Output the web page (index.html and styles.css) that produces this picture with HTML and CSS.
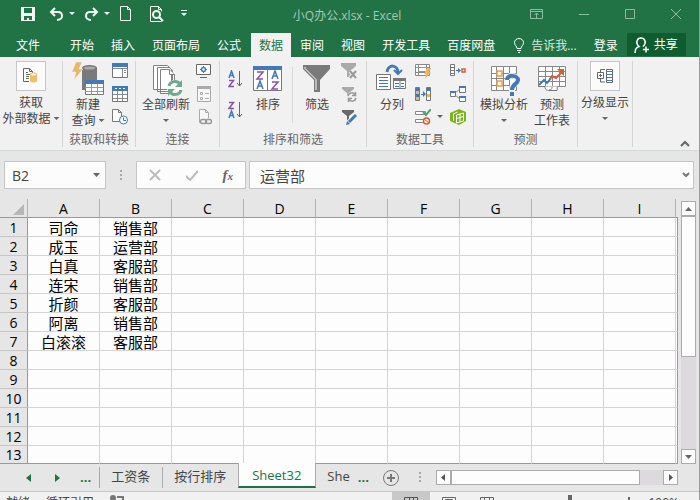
FILE: index.html
```html
<!DOCTYPE html>
<html lang="zh-CN">
<head>
<meta charset="utf-8">
<title>小Q办公.xlsx - Excel</title>
<link rel="stylesheet" href="styles.css">
</head>
<body>
<div class="window">
<header class="titlebar">
	<div class="quick">
		<button aria-label="保存"><svg width="14" height="14" viewBox="0 0 14 14"><path fill="#f4f8f5" fill-rule="evenodd" d="M0 0h14v14H0zM3 1v5h8V1zM3 9v4h3v-2h2v2h3V9z"/></svg></button>
		<button class="wide" aria-label="撤消"><svg width="26" height="14" viewBox="0 0 26 14"><path fill="none" stroke="#f4f8f5" stroke-width="2" d="M6 1L2 5l4 4M2 5h7c3 0 4 2 4 4s-2 4-5 4"/><path fill="#f4f8f5" d="M20 5h6l-3 3z"/></svg></button>
		<button class="wide" aria-label="恢复"><svg width="26" height="14" viewBox="0 0 26 14"><path fill="none" stroke="#f4f8f5" stroke-width="2" d="M9 1l4 4-4 4M13 5H6C3 5 2 7 2 9s2 4 5 4"/><path fill="#f4f8f5" d="M20 5h6l-3 3z"/></svg></button>
		<button aria-label="新建"><svg width="14" height="15" viewBox="0 0 14 15"><path fill="none" stroke="#f4f8f5" d="M1.500.500h7l3 3v11h-10zM8.500.5v3h3"/></svg></button>
		<button class="preview" aria-label="打印预览"><svg width="14" height="16" viewBox="0 0 14 16"><path fill="none" stroke="#f4f8f5" d="M.5.500h8l3 3v2M.5.5v15h11v-2M8.500.5v3h3"/><circle cx="6.500" cy="8.500" r="3.500" fill="none" stroke="#f4f8f5" stroke-width="2"/><path stroke="#f4f8f5" stroke-width="2" d="M9 11l4 4"/></svg></button>
		<button class="custom" aria-label="自定义"><svg width="6" height="7" viewBox="0 0 6 7"><path fill="#f4f8f5" d="M0 0h6v1H0zM0 3h6L3 6z"/></svg></button>
	</div>
	<div class="doc-name">小Q办公.xlsx - Excel</div>
	<div class="sys">
		<button aria-label="功能区显示选项"><svg width="13" height="10" viewBox="0 0 13 10"><path fill="none" stroke="#8fb9a0" d="M.5.5h12v9H.5zM1 2.500h11M6.500 9V4M4.500 6l2-2 2 2"/></svg></button>
		<button aria-label="最小化"><svg width="10" height="10" viewBox="0 0 10 10"><path stroke="#8fb9a0" d="M0 5.500h10"/></svg></button>
		<button aria-label="最大化"><svg width="10" height="10" viewBox="0 0 10 10"><path fill="none" stroke="#8fb9a0" d="M.5.5h9v9h-9z"/></svg></button>
		<button aria-label="关闭"><svg width="10" height="10" viewBox="0 0 10 10"><path stroke="#8fb9a0" d="M0 0l10 10M10 0L0 10"/></svg></button>
	</div>
</header>

<nav class="tabs">
	<button class="file">文件</button>
	<button>开始</button>
	<button>插入</button>
	<button>页面布局</button>
	<button>公式</button>
	<button class="on">数据</button>
	<button>审阅</button>
	<button>视图</button>
	<button>开发工具</button>
	<button>百度网盘</button>
	<button class="tell"><svg width="10" height="15" viewBox="0 0 10 15"><path fill="none" stroke="#fff" d="M3 10.500C3 8 .5 7.500.5 4.500a4.500 4 0 0 1 9 0C9.500 7.500 7 8 7 10.500zM3 12.500h4M4 14.500h2"/></svg>告诉我...</button>
	<button class="login">登录</button>
	<button class="share"><svg width="16" height="16" viewBox="0 0 16 16"><path fill="none" stroke="#fff" stroke-width="1.500" d="M1 16c0-4 2-6 4-6.500C1 6 3 1 7 1s6 5 2 8.500M9 12.500h6M12 9.500v6"/></svg>共享</button>
</nav>

<section class="ribbon">
	<div class="group g-ext">
		<div class="tools">
			<button class="big"><span class="frame"><svg width="16" height="16" viewBox="0 0 16 16"><path fill="#fff" stroke="#666" d="M.5 13.500V.5h6l3 3v3M6.500.5v3h3M.5 13.500H6M3 4.500h2M3 6.500h4M3 8.500h3M3 10.500h3"/><path fill="#ecc06b" d="M7 6c0-2 7-2 7 0v7c0 2-7 2-7 0z"/><ellipse cx="10.500" cy="6.500" rx="2.500" ry="1" fill="#fff"/></svg></span>获取<br>外部数据<i class="caret"></i></button>
		</div>
	</div>
	<div class="group g-query">
		<div class="tools">
			<button class="big"><svg class="pic" width="34" height="36" viewBox="0 0 34 36"><path fill="#7a7a7a" d="M11 7c0-4 15-4 15 0v22H11z"/><ellipse cx="18.500" cy="7" rx="5.500" ry="1.500" fill="#aaa"/><path fill="#e9b763" stroke="#f1f1f1" stroke-width=".5" d="M5 1h6L8 8h4L3 19l2-8H1z"/><path fill="#fff" stroke="#777" d="M14.500 19.500h18v14h-18z"/><path fill="#4379b5" d="M14 19h19v4H14z"/><path stroke="#999" fill="none" d="M14 26.500h18M14 30.500h18M20.500 23v11M26.500 23v11"/></svg>新建<br>查询<i class="caret"></i></button>
			<div class="smalls">
				<button aria-label="显示查询"><svg width="16" height="16" viewBox="0 0 16 16"><path fill="#fff" stroke="#777" d="M.5.5h15v14H.5z"/><path fill="#4379b5" d="M0 0h16v4H0z"/><path fill="none" stroke="#888" d="M1 5.500h14M10.500 6v8M12 7.500h2M12 9.500h2"/></svg></button>
				<button aria-label="从表格"><svg width="16" height="16" viewBox="0 0 16 16"><path fill="#fff" stroke="#777" d="M.5.5h15v15H.5z"/><path fill="#4379b5" d="M0 0h16v5H0z"/><path stroke="#fff" d="M3 2.500h2M7 2.500h2M11 2.500h2"/><path stroke="#888" d="M1 8.500h14M1 12.500h14M5.500 5v10M10.500 5v10"/></svg></button>
				<button aria-label="最近使用的源"><svg width="16" height="16" viewBox="0 0 16 16"><path fill="#fff" stroke="#777" d="M.5.5h6l3 3v9h-9zM6.500.5v3h3"/><circle cx="11.500" cy="11" r="4" fill="#fff" stroke="#4379b5"/><path fill="none" stroke="#4379b5" d="M11.500 8.500v3H14"/></svg></button>
			</div>
		</div>
		<div class="caption">获取和转换</div>
	</div>
	<div class="group g-conn">
		<div class="tools">
			<button class="big"><svg class="pic" width="34" height="36" viewBox="0 0 34 36"><g fill="#fff" stroke="#808080"><path d="M4.500 28.500v-24h14l4 4v20zM8.500 30.500v-24h12l3 3v21zM11.500 32.500v-24h9l5 5v19z"/><path d="M20.500 8.500v5h5"/></g><circle cx="26" cy="27" r="8" fill="#fff"/><g fill="none" stroke="#72a98d" stroke-width="3"><path d="M20 25c1-5 8-6 11-2M32 29c-1 5-8 6-11 2"/></g><path fill="#72a98d" d="M33 19v7h-7zM19 35v-7h7z"/></svg>全部刷新<br><i class="caret low"></i></button>
			<div class="smalls">
				<button aria-label="连接"><svg width="16" height="16" viewBox="0 0 16 16"><path fill="#fff" stroke="#666" d="M.5 1.500h14v10H.5zM4 14.500h7"/><circle cx="7.500" cy="6.500" r="2" fill="none" stroke="#4379b5" stroke-width="1.500"/><path stroke="#4379b5" d="M7.500 3v1M7.500 9v1M4 6.500h1M10 6.500h1"/></svg></button>
				<button aria-label="属性" disabled><svg width="16" height="16" viewBox="0 0 16 16"><path fill="#f7f7f7" stroke="#aaa" d="M1.500.500h13v15h-13z"/><path fill="#aaa" d="M1 0h14v3H1z"/><path fill="none" stroke="#aaa" d="M4.500 6.500h2v2h-2zM4.500 11.500h2v2h-2zM9 7.500h4M9 12.500h4"/></svg></button>
				<button aria-label="编辑链接" disabled><svg width="16" height="16" viewBox="0 0 16 16"><path fill="#f7f7f7" stroke="#aaa" d="M5 13.500H3.500V.500h6l3 3V9M9.500.500v3h3"/><rect x="4.500" y="10.500" width="6" height="4" rx="2" fill="none" stroke="#999" stroke-width="1.500"/><rect x="9.500" y="10.500" width="6" height="4" rx="2" fill="none" stroke="#999" stroke-width="1.500"/></svg></button>
			</div>
		</div>
		<div class="caption">连接</div>
	</div>
	<div class="group g-sort">
		<div class="tools">
			<div class="orders">
				<button aria-label="升序"><svg width="16" height="18" viewBox="0 0 16 18"><path fill="none" stroke="#4379b5" stroke-width="1.500" d="M1 8l2.500-7L6 8M2 5.500h3"/><path fill="none" stroke="#8e4fa8" stroke-width="1.500" d="M1 10.500h4.500L1 16.500h5"/><path fill="none" stroke="#666" d="M11.500 1v15M9 13l2.500 3 2.500-3"/></svg></button>
				<button aria-label="降序"><svg width="16" height="18" viewBox="0 0 16 18"><path fill="none" stroke="#8e4fa8" stroke-width="1.500" d="M1 1.500h4.500L1 7.500h5"/><path fill="none" stroke="#4379b5" stroke-width="1.500" d="M1 17l2.500-7L6 17M2 14.500h3"/><path fill="none" stroke="#666" d="M11.500 1v15M9 13l2.500 3 2.500-3"/></svg></button>
			</div>
			<button class="big"><svg class="pic" width="30" height="36" viewBox="0 0 30 36"><path fill="#fff" stroke="#777" d="M.500 5.500h28v24H.5zM14.500 8v21"/><path fill="#4379b5" d="M0 5h29v4H0z"/><g fill="none" stroke="#8e4fa8" stroke-width="1.500"><path d="M4 11h6l-6 7h6M19 21h6l-6 7h6"/></g><g fill="none" stroke="#4379b5" stroke-width="1.500"><path d="M4 28l3-8 3 8M5 25h4M19 18l3-8 3 8M20 15h4"/></g></svg>排序</button>
			<span class="rule"></span>
			<button class="big"><svg class="pic" width="30" height="36" viewBox="0 0 30 36"><path fill="#7a7a7a" d="M1 4h27v4L18 19v12h-6V19L1 8z"/><path fill="none" stroke="#fff" d="M3 6v1.500l11 11V29"/></svg>筛选</button>
			<div class="smalls">
				<button aria-label="清除" disabled><svg width="16" height="16" viewBox="0 0 16 16"><path fill="#aaa" d="M0 0h15v3L9 8v6H6V8L0 3z"/><path stroke="#f1f1f1" stroke-width="4" d="M9 8l7 7M16 8l-7 7"/><path stroke="#999" stroke-width="2" d="M9 8l6 7M15 8l-6 7"/></svg></button>
				<button aria-label="重新应用" disabled><svg width="16" height="16" viewBox="0 0 16 16"><path fill="#aaa" d="M1 1h12v2L8 7v5H6V7L1 3z"/><circle cx="11" cy="11" r="5" fill="#f1f1f1"/><path fill="none" stroke="#999" stroke-width="1.500" d="M7 10c1-4 6-4 7-1M15 12c-1 4-6 4-7 1M14.500 6v3.500H11M7.500 16v-3.500H11"/></svg></button>
				<button aria-label="高级"><svg width="16" height="16" viewBox="0 0 16 16"><path fill="#6a6a6a" d="M1 1h12v2L8 7v6H6V7L1 3z"/><path stroke="#f1f1f1" stroke-width="5" d="M7 14l8-8"/><path stroke="#4379b5" stroke-width="3" d="M8 13l7-7"/><path fill="#4379b5" d="M5 16l1-4 3 3z"/></svg></button>
			</div>
		</div>
		<div class="caption">排序和筛选</div>
	</div>
	<div class="group g-data">
		<div class="tools">
			<button class="big"><svg class="pic" width="32" height="36" viewBox="0 0 32 36"><path fill="#fff" stroke="#777" d="M.500 13.500h14v15H.5zM17.500 17.500h12v10h-12z"/><path stroke="#4379b5" d="M3 16.500h9M3 19.500h9M3 22.500h9M3 25.500h9"/><path fill="#777" d="M17 17h13v3H17z"/><path stroke="#4379b5" d="M19 22.500h4M25 22.500h3M19 25.500h4M25 25.500h3"/><path stroke="#777" d="M24 20v8"/><path fill="none" stroke="#4379b5" stroke-width="3" d="M11 11c1-8 11-8 11 1"/><path fill="none" stroke="#4379b5" stroke-width="2" d="M18 9l4 4 4-4"/></svg>分列</button>
			<div class="smalls">
				<button aria-label="快速填充"><svg width="16" height="16" viewBox="0 0 16 16"><path fill="#fff" stroke="#888" d="M.500 1.500h14v11H.5zM1 4.500h13M1 9.500h13M3.500 2v10M11.500 2v10"/><path fill="#fff" stroke="#72a98d" d="M3.500 4.500h8v4h-8z"/><path fill="#e9b763" d="M12 5h4l-2 4h2l-6 7 1-5H9z"/></svg></button>
				<button aria-label="删除重复项"><svg width="16" height="16" viewBox="0 0 16 16"><path fill="#fff" stroke="#777" d="M.500 1.500h4v13h-4zM11.500 1.500h4v13h-4z"/><path fill="#e9b763" d="M1 5h3v3H1zM1 11h3v3H1zM12 8h3v3h-3z"/><path fill="#4379b5" d="M1 2h3v3H1zM1 8h3v3H1zM12 2h3v3h-3zM8 5l3 3-3 3z"/><path stroke="#4379b5" d="M6 8.500h4"/></svg></button>
				<button aria-label="数据验证"><svg width="16" height="16" viewBox="0 0 16 16"><path fill="#fff" stroke="#888" d="M.500 2.500h10v3H.5zM.5 10.500h10v3H.5z"/><path fill="none" stroke="#4f9f78" stroke-width="2" d="M8 3l3 3 5-6"/><circle cx="11.500" cy="12" r="3" fill="#fff" stroke="#d95b3c" stroke-width="1.500"/><path stroke="#d95b3c" d="M9 10l5 4"/></svg></button>
			</div>
			<i class="caret alone"></i>
			<div class="smalls">
				<button aria-label="合并计算"><svg width="16" height="16" viewBox="0 0 16 16"><path fill="#fff" stroke="#777" d="M.500 1.500h4v11h-4zM1 4.500h4M1 7.500h4M1 10.500h4"/><path stroke="#4379b5" d="M6 7.500h4"/><path fill="#4379b5" d="M8 5l3 2.500L8 10z"/><path fill="#fff" stroke="#d95b3c" stroke-width="1.500" d="M12 6h3v3h-3z"/></svg></button>
				<button aria-label="关系"><svg width="16" height="16" viewBox="0 0 16 16"><path stroke="#888" d="M5 7l5-4M5 9l5 4"/><path fill="#fff" stroke="#777" d="M.500 5.500h5v5h-5zM9.500.500h6v6h-6zM9.500 10.500h6v5h-6z"/><path fill="#4379b5" d="M0 5h6v2H0zM9 0h7v2H9zM9 10h7v2H9z"/></svg></button>
				<button aria-label="管理数据模型"><svg width="16" height="16" viewBox="0 0 16 16"><path fill="#7ab51d" d="M0 4l9-4 7 3v9l-7 4-9-4z"/><path fill="none" stroke="#fff" d="M3.500 4.500v7M3.500 5l4-2M6.500 6v8l7-2V4zM6.500 9.500l7-2M10 5v8"/></svg></button>
			</div>
		</div>
		<div class="caption">数据工具</div>
	</div>
	<div class="group g-fore">
		<div class="tools">
			<button class="big"><svg class="pic" width="32" height="36" viewBox="0 0 32 36"><path fill="#fff" stroke="#888" d="M3.500 5.500h25v24h-25zM3 12.500h25M3 17.500h25M3 24.500h25M8.500 5v24M15.500 5v24M21.500 5v24"/><path fill="#fff" stroke="#e59a4f" stroke-width="1.500" d="M9 10h5v5H9zM9 20h5v5H9z"/><path fill="none" stroke="#f1f1f1" stroke-width="6" d="M20 19c0-6 9-5 9 0 0 4-5 4-5 9v3"/><path fill="none" stroke="#4379b5" stroke-width="4" d="M19 19c0-6 11-5 11 0 0 4-6 4-6 10"/><path fill="#4379b5" d="M22 31h4v4h-4z"/></svg>模拟分析<br><i class="caret low"></i></button>
			<button class="big"><svg class="pic" width="30" height="36" viewBox="0 0 30 36"><path fill="#fff" stroke="#888" d="M1.500 5.500h27v20h-27zM1 10.500h27M1 15.500h27M1 20.500h27M8.500 5v20M15.500 5v20M22.500 5v20"/><path fill="#fff" stroke="#777" d="M1 25.500h7c0 4 3 4 4 4h8c1-2-1-3 1-4M12 29c3 0 3-2 3-3"/><path fill="none" stroke="#4379b5" stroke-width="2" d="M2 24l5-5 3 3 4-5"/><path fill="none" stroke="#d95b3c" stroke-width="2" d="M13 18l2-3 4 2 7-7"/><path fill="#d95b3c" d="M20 8h7v7z"/></svg>预测<br>工作表</button>
		</div>
		<div class="caption">预测</div>
	</div>
	<div class="group g-level">
		<div class="tools">
			<button class="big"><span class="frame"><svg width="16" height="14" viewBox="0 0 16 14"><path fill="none" stroke="#666" d="M.500 3.500h6v6h-6zM2 6.500h3M3.500 5v3M3.500 3V.500H8M3.500 10v3H8"/><path fill="#fff" stroke="#666" d="M9.500.500h6v13h-6z"/><path stroke="#4379b5" d="M9 2.500h7M9 5.500h7M9 8.500h7M9 11.500h7"/></svg></span>分级显示<br><i class="caret"></i></button>
		</div>
	</div>
	<button class="fold" aria-label="折叠功能区"><svg width="10" height="7" viewBox="0 0 10 7"><path fill="none" stroke="#666" stroke-width="2" d="M1 6l4-4 4 4"/></svg></button>
</section>

<section class="formula">
	<div class="name-box"><input type="text" value="B2" aria-label="名称框"><i class="caret"></i></div>
	<span class="dots"></span>
	<div class="fx">
		<button aria-label="取消"><svg width="12" height="12" viewBox="0 0 12 12"><path stroke="#bbb" stroke-width="2" d="M1 1l10 10M11 1L1 11"/></svg></button>
		<button aria-label="输入"><svg width="12" height="12" viewBox="0 0 12 12"><path fill="none" stroke="#bbb" stroke-width="2" d="M0 7l4 4 8-9"/></svg></button>
		<button class="fn" aria-label="插入函数"><em>f</em><sub>x</sub></button>
	</div>
	<div class="entry"><input type="text" value="运营部" aria-label="编辑栏"><svg width="8" height="6" viewBox="0 0 8 6"><path fill="none" stroke="#777" stroke-width="2" d="M1 1l3 3 3-3"/></svg></div>
</section>

<main class="sheet">
	<table class="grid">
		<colgroup><col class="num"><col><col><col><col><col><col><col><col><col><col class="edge"></colgroup>
		<thead>
			<tr><th class="corner"><svg width="11" height="11" viewBox="0 0 11 11"><path fill="#b7b7b7" d="M11 0v11H0z"/></svg></th><th>A</th><th>B</th><th>C</th><th>D</th><th>E</th><th>F</th><th>G</th><th>H</th><th>I</th><th></th></tr>
		</thead>
		<tbody>
			<tr><th>1</th><td>司命</td><td>销售部</td><td></td><td></td><td></td><td></td><td></td><td></td><td></td><td></td></tr>
			<tr><th>2</th><td>成玉</td><td>运营部</td><td></td><td></td><td></td><td></td><td></td><td></td><td></td><td></td></tr>
			<tr><th>3</th><td>白真</td><td>客服部</td><td></td><td></td><td></td><td></td><td></td><td></td><td></td><td></td></tr>
			<tr><th>4</th><td>连宋</td><td>销售部</td><td></td><td></td><td></td><td></td><td></td><td></td><td></td><td></td></tr>
			<tr><th>5</th><td>折颜</td><td>客服部</td><td></td><td></td><td></td><td></td><td></td><td></td><td></td><td></td></tr>
			<tr><th>6</th><td>阿离</td><td>销售部</td><td></td><td></td><td></td><td></td><td></td><td></td><td></td><td></td></tr>
			<tr><th>7</th><td>白滚滚</td><td>客服部</td><td></td><td></td><td></td><td></td><td></td><td></td><td></td><td></td></tr>
			<tr><th>8</th><td></td><td></td><td></td><td></td><td></td><td></td><td></td><td></td><td></td><td></td></tr>
			<tr><th>9</th><td></td><td></td><td></td><td></td><td></td><td></td><td></td><td></td><td></td><td></td></tr>
			<tr><th>10</th><td></td><td></td><td></td><td></td><td></td><td></td><td></td><td></td><td></td><td></td></tr>
			<tr><th>11</th><td></td><td></td><td></td><td></td><td></td><td></td><td></td><td></td><td></td><td></td></tr>
			<tr><th>12</th><td></td><td></td><td></td><td></td><td></td><td></td><td></td><td></td><td></td><td></td></tr>
			<tr class="last"><th>13</th><td></td><td></td><td></td><td></td><td></td><td></td><td></td><td></td><td></td><td></td></tr>
		</tbody>
	</table>
	<div class="vscroll">
		<button class="arrow" aria-label="向上"><svg width="7" height="4" viewBox="0 0 7 4"><path fill="#666" d="M0 4h7L3.500 0z"/></svg></button>
		<div class="thumb"></div>
		<div class="track"></div>
		<button class="arrow" aria-label="向下"><svg width="7" height="4" viewBox="0 0 7 4"><path fill="#666" d="M0 0h7L3.500 4z"/></svg></button>
	</div>
</main>

<footer>
	<div class="sheets">
		<div class="steps">
			<button aria-label="上一张"><svg width="5" height="8" viewBox="0 0 5 8"><path fill="#1a7544" d="M5 0v8L0 4z"/></svg></button>
			<button aria-label="下一张"><svg width="5" height="8" viewBox="0 0 5 8"><path fill="#1a7544" d="M0 0v8l5-4z"/></svg></button>
			<button class="more">...</button>
		</div>
		<button class="tab">工资条</button>
		<button class="tab">按行排序</button>
		<button class="tab on">Sheet32</button>
		<button class="tab cut">She</button>
		<button class="more">...</button>
		<button class="add" aria-label="新工作表"><svg width="16" height="16" viewBox="0 0 16 16"><circle cx="8" cy="8" r="7.500" fill="none" stroke="#777"/><path stroke="#777" stroke-width="2" d="M4 8h8M8 4v8"/></svg></button>
		<span class="dots"></span>
		<div class="hscroll">
			<button class="arrow" aria-label="向左"><svg width="4" height="7" viewBox="0 0 4 7"><path fill="#555" d="M4 0v7L0 3.500z"/></svg></button>
			<div class="thumb"></div>
			<div class="track"></div>
			<button class="arrow" aria-label="向右"><svg width="4" height="7" viewBox="0 0 4 7"><path fill="#555" d="M0 0v7l4-3.500z"/></svg></button>
		</div>
	</div>
	<div class="status">
		<span>就绪</span>
		<span>循环引用</span>
		<svg width="14" height="12" viewBox="0 0 14 12"><circle cx="3" cy="3" r="3" fill="#777"/><path fill="none" stroke="#777" stroke-width="2" d="M7 2h6v8H2V7"/></svg>
		<div class="views">
			<button class="on" aria-label="普通"><svg width="14" height="12" viewBox="0 0 14 12"><path fill="none" stroke="#555" d="M.5.500h13v11H.5zM5.500 1v10M9.500 1v10M1 4.500h12M1 8.500h12"/></svg></button>
			<button aria-label="页面布局"><svg width="14" height="12" viewBox="0 0 14 12"><path fill="none" stroke="#666" d="M.5.500h13v11H.5zM3.500 2.500h7v9h-7zM5 5.500h4M5 8.500h4"/></svg></button>
			<button aria-label="分页预览"><svg width="14" height="12" viewBox="0 0 14 12"><path fill="none" stroke="#666" d="M.5.500h13v11H.5zM4.500 1v6h5V1"/></svg></button>
		</div>
		<div class="zoom"><svg width="70" height="12" viewBox="0 0 70 12"><path stroke="#999" d="M0 6.500h52"/><path fill="#666" d="M6 0h4v12H6z"/><path stroke="#666" stroke-width="2" d="M62 6h10M67 2v8"/></svg><span>100%</span></div>
	</div>
</footer>
</div>
</body>
</html>
```

FILE: styles.css
```css
*{box-sizing:border-box;}
body{margin:0;height:100vh;overflow:hidden;background:#e6e6e6;font:12px/15px "Open Sans","Noto Sans CJK SC",sans-serif;color:#444;}
button{margin:0;padding:0;border:0;background:none;font:inherit;color:inherit;}
input{border:0;padding:0;background:none;font:inherit;color:inherit;outline:0;min-width:0;}
svg{display:block;flex:none;}
.window{border-right:1px solid #999;}

/* title */
.titlebar{display:flex;align-items:center;height:33px;padding:0 18px 6px 21px;background:#217346;}
.quick{display:flex;align-items:center;flex:1;}
.quick button{margin-right:14px;}
.quick .wide{margin-right:9px;}
.quick .preview{margin:0 17px 0 3px;}
.doc-name{margin-right:8px;padding-top:4px;color:#a6c7b5;}
.sys{display:flex;justify-content:flex-end;align-items:center;flex:1;gap:36px;}

.tabs{display:flex;gap:1px;height:24px;padding-right:16px;background:#217346;color:#fff;}
.tabs button{padding:0 8px;white-space:nowrap;}
.tabs .file{padding:0 21px 0 16px;}
.tabs .on{margin-left:1px;background:#f1f1f1;color:#217346;}
.tabs .tell{display:flex;align-items:center;gap:7px;margin-left:2px;color:#d8e8df;}
.tabs .login{margin-left:auto;}
.tabs .share{display:flex;align-items:center;gap:4px;height:23px;padding:0 8px 0 7px;background:#0e5c2f;}

/* ribbon */
.ribbon{display:flex;height:94px;padding:4px 0 3px;background:#f1f1f1;border-bottom:1px solid #cfdcd4;}
.group{display:flex;flex-direction:column;border-right:1px solid #d2d6d4;}
.tools{display:flex;height:72px;}
.caption{padding-top:2px;text-align:center;color:#666;}
.big{display:flow-root;line-height:16px;white-space:nowrap;text-align:center;}
.tools button{align-self:flex-start;}
.pic{margin:0 auto;}
.frame{display:flex;align-items:center;justify-content:center;width:30px;height:30px;margin:0 auto 4px;background:#fbfbfb;border:1px solid #c6c6c6;}
.caret{display:inline-block;width:6px;height:3px;margin-left:3px;vertical-align:3px;background:#666;clip-path:polygon(0 0,100% 0,50% 100%);}
.caret.low,.g-level .caret{margin-left:0;}
.smalls{display:flex;flex-direction:column;gap:7px;padding-top:2px;}
.orders{display:flex;flex-direction:column;gap:13px;padding-top:9px;}
.rule{width:1px;height:56px;margin-top:6px;background:#d8d8d8;}
.g-ext .tools,.g-level .tools{justify-content:center;}
.g-ext{width:63px;}
.g-query .tools{gap:7px;padding:0 7px 0 8px;}
.g-conn .tools{gap:6px;padding:0 7px 0 6px;}
.g-sort .tools{gap:9px;padding:0 9px 0 8px;}
.g-data .tools{padding:0 7px 0 9px;}
.g-data .big{margin-right:7px;}
.g-data .caret.alone{margin:54px 7px 0 6px;}
.g-fore .tools{gap:6px;padding:0 7px 0 6px;}
.g-level{width:55px;}
.fold{align-self:flex-end;margin:0 9px 0 auto;}

/* formula bar */
.formula{display:flex;height:48px;padding:10px 5px 10px 4px;font-size:14px;}
.name-box,.fx,.entry{display:flex;align-items:center;height:28px;background:#fcfcfc;border:1px solid #c6c6c6;}
.name-box{width:102px;padding:0 5px 0 7px;}
.name-box input{flex:1;}
.name-box .caret{width:7px;height:4px;}
.dots{width:2px;height:10px;margin:9px 14px;background:repeating-linear-gradient(#aaa 0 2px,transparent 2px 4px);}
.fx{justify-content:space-between;width:110px;padding:0 12px;}
.fn{font:bold 15px/20px "Liberation Serif",serif;color:#666;}
.fn sub{font-size:11px;font-style:italic;vertical-align:0;}
.entry{flex:1;margin-left:3px;padding:0 3px 0 10px;}
.entry input{flex:1;font-size:15px;}

/* cells */
.sheet{display:flex;}
.grid{flex:1;width:100%;table-layout:fixed;border-collapse:separate;border-spacing:0;color:#000;font-size:15px;line-height:16px;}
.grid th,.grid td{height:19px;padding:2px 0 0;text-align:center;border-right:1px solid #d4d4d4;border-bottom:1px solid #d4d4d4;}
.grid td{background:#fdfdfd;}
.grid th{background:#e6e6e6;font-weight:normal;font-size:14px;border-bottom-color:#c6c6c6;}
.grid thead th{border-right-color:#b4b4b4;border-bottom-color:#999;}
.grid tbody th{border-right-color:#999;}
.grid thead th:last-child{border-right:0;}
.grid tbody td:last-child{border-right-color:#999;}
.grid .last th,.grid .last td{height:18px;padding-top:1px;border-bottom-color:#999;}
.num{width:28px;}
.edge{width:2px;}
.corner svg{margin-left:13px;}
.arrow{display:flex;align-items:center;justify-content:center;flex:none;width:15px;height:15px;background:#fdfdfd;border:1px solid #ababab;}
.thumb{background:#fdfdfd;border:1px solid #ababab;}
.track{background:#dcdadc;}
.vscroll{display:flex;flex-direction:column;margin:2px 3px 0;}
.vscroll .thumb{flex:3;}
.vscroll .track{flex:2;}

/* bottom */
.sheets{display:flex;height:27px;padding-right:21px;font-size:13px;}
.steps{display:flex;align-items:center;gap:24px;padding:0 8px 0 26px;}
.steps .more{margin-left:-4px;}
.more{color:#1a7544;font-weight:bold;}
.tab{height:21px;margin-top:3px;padding:0 12px 3px 11px;border-left:1px solid #ababab;}
.tab.on{height:25px;margin-top:-1px;padding:2px 14px 0 13px;background:#fdfdfd;border-right:1px solid #ababab;border-bottom:2px solid #217346;color:#217346;}
.cut{border:0;margin-right:-4px;}
.add{margin:0 18px 0 14px;}
.sheets .dots{margin:8px 15px 0 2px;}
.hscroll{display:flex;flex:1;height:15px;margin-top:6px;}
.hscroll .thumb{flex:8;}
.hscroll .track{flex:1;}
.status{display:flex;gap:16px;height:22px;padding:3px 20px 0 6px;background:#f1f1f1;border-top:1px solid #c6c6c6;}
.views{display:flex;margin:-3px 0 0 auto;}
.views button{padding:3px 12px;}
.views .on{background:#c8c8c8;}
.zoom{display:flex;gap:16px;margin-left:40px;}
```
